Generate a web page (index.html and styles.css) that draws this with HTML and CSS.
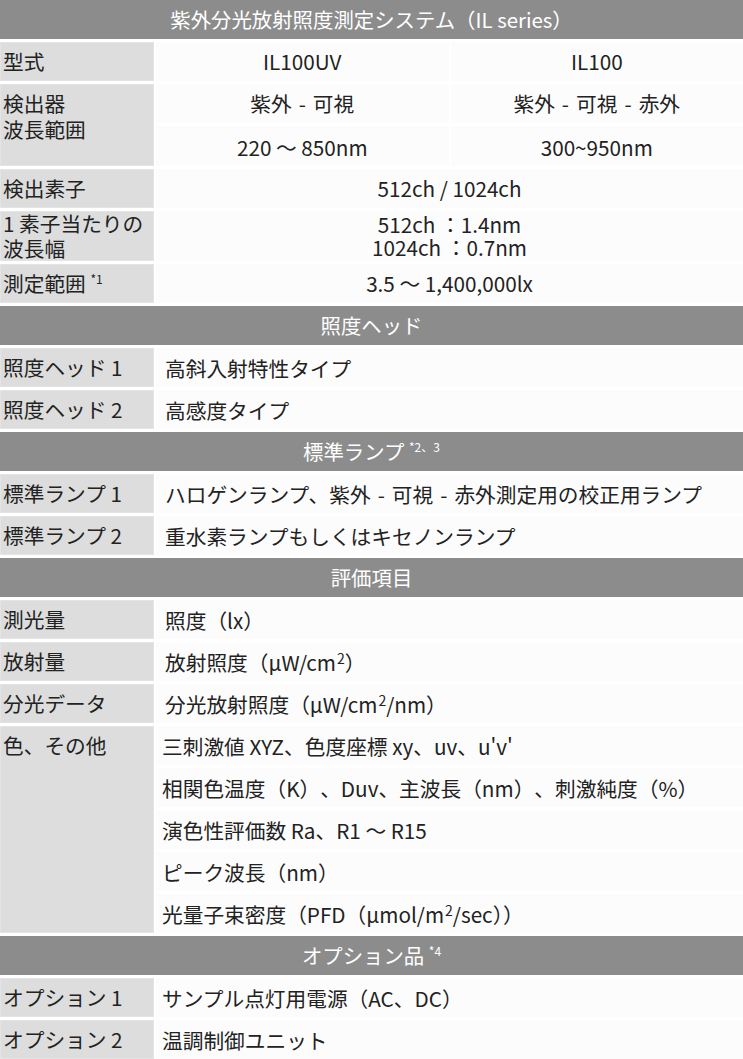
FILE: index.html
```html
<!DOCTYPE html>
<html lang="ja">
<head>
<meta charset="utf-8">
<title>紫外分光放射照度測定システム（IL series）</title>
<link rel="stylesheet" href="styles.css">
</head>
<body>
<div class="sheet">
  <div class="sec">紫外分光放射照度測定システム（IL series）</div>

  <div class="row">
    <div class="lab">型式</div>
    <div class="vals two">
      <div class="v c">IL100UV</div>
      <div class="v c">IL100</div>
    </div>
  </div>

  <div class="row">
    <div class="lab">検出器<br>波長範囲</div>
    <div class="vals two">
      <div class="v c">紫外<span class="dash">-</span>可視</div>
      <div class="v c">紫外<span class="dash">-</span>可視<span class="dash">-</span>赤外</div>
      <div class="v c tall">220 〜 850nm</div>
      <div class="v c tall">300~950nm</div>
    </div>
  </div>

  <div class="row">
    <div class="lab">検出素子</div>
    <div class="vals"><div class="v c">512ch / 1024ch</div></div>
  </div>

  <div class="row">
    <div class="lab lab-two">1 素子当たりの<br>波長幅</div>
    <div class="vals"><div class="v c multi">512ch ：1.4nm<br>1024ch ：0.7nm</div></div>
  </div>

  <div class="row">
    <div class="lab">測定範囲 <sup>*1</sup></div>
    <div class="vals"><div class="v c">3.5 〜 1,400,000lx</div></div>
  </div>

  <div class="sec">照度ヘッド</div>

  <div class="row">
    <div class="lab">照度ヘッド 1</div>
    <div class="vals"><div class="v">高斜入射特性タイプ</div></div>
  </div>
  <div class="row">
    <div class="lab">照度ヘッド 2</div>
    <div class="vals"><div class="v">高感度タイプ</div></div>
  </div>

  <div class="sec">標準ランプ <sup>*2、3</sup></div>

  <div class="row">
    <div class="lab">標準ランプ 1</div>
    <div class="vals"><div class="v">ハロゲンランプ、紫外<span class="dash">-</span>可視<span class="dash">-</span>赤外測定用の校正用ランプ</div></div>
  </div>
  <div class="row">
    <div class="lab">標準ランプ 2</div>
    <div class="vals"><div class="v">重水素ランプもしくはキセノンランプ</div></div>
  </div>

  <div class="sec">評価項目</div>

  <div class="row">
    <div class="lab">測光量</div>
    <div class="vals"><div class="v">照度（lx）</div></div>
  </div>
  <div class="row">
    <div class="lab">放射量</div>
    <div class="vals"><div class="v">放射照度（µW/cm<sup>2</sup>）</div></div>
  </div>
  <div class="row">
    <div class="lab">分光データ</div>
    <div class="vals"><div class="v">分光放射照度（µW/cm<sup>2</sup>/nm）</div></div>
  </div>
  <div class="row">
    <div class="lab">色、その他</div>
    <div class="vals">
      <div class="v tight">三刺激値 XYZ、色度座標 xy、uv、u'v'</div>
      <div class="v tight">相関色温度（K）、Duv、主波長（nm）、刺激純度（%）</div>
      <div class="v tight">演色性評価数 Ra、R1 〜 R15</div>
      <div class="v tight">ピーク波長（nm）</div>
      <div class="v tight">光量子束密度（PFD（µmol/m<sup>2</sup>/sec<span class="trim">））</span></div>
    </div>
  </div>

  <div class="sec">オプション品 <sup>*4</sup></div>

  <div class="row">
    <div class="lab">オプション 1</div>
    <div class="vals"><div class="v tight">サンプル点灯用電源（AC、DC）</div></div>
  </div>
  <div class="row">
    <div class="lab">オプション 2</div>
    <div class="vals"><div class="v tight">温調制御ユニット</div></div>
  </div>
</div>
</body>
</html>
```

FILE: styles.css
```css
html, body {
  margin: 0;
  padding: 0;
  background: #ffffff;
}

body {
  font-family: "Noto Sans CJK JP", "Noto Sans", sans-serif;
  font-size: 20.7px;
  color: #222222;
  text-spacing-trim: space-all;
}

.sheet {
  width: 743px;
  display: flex;
  flex-direction: column;
  gap: 3px;
}

.sec {
  height: 39px;
  background: #8c8c8c;
  color: #ffffff;
  text-align: center;
  line-height: 39px;
  font-size: 20.4px;
}

.sec sup,
.lab sup {
  font-size: 12px;
  line-height: 0;
  vertical-align: 8px;
}

.v sup {
  font-size: 14px;
  line-height: 0;
  vertical-align: 7px;
  margin-left: 1px;
}

.trim {
  text-spacing-trim: normal;
}

.dash {
  margin: 0 7px;
}

.row {
  display: grid;
  grid-template-columns: 154px 1fr;
  column-gap: 2px;
}

.lab {
  background: #dcdddc;
  box-shadow: inset 0 0 0 1px #e3e4e3;
  padding: 6px 3px 0 3px;
  line-height: 26px;
  white-space: nowrap;
}

.lab-two {
  padding-top: 0;
  line-height: 25px;
}

.vals {
  display: grid;
  grid-template-columns: 1fr;
  row-gap: 3px;
}

.vals.two {
  grid-template-columns: 1fr 1fr;
  column-gap: 2px;
  row-gap: 3px;
}

.v {
  background: #fcfcfc;
  height: 39px;
  padding: 7px 0 0 9px;
  line-height: 26px;
  box-sizing: border-box;
  white-space: nowrap;
}

.v.tight {
  padding-left: 6px;
}

.v.c {
  text-align: center;
  padding-left: 0;
  padding-top: 6px;
}

.v.tall {
  height: 40px;
  padding-top: 8px;
}

.v.multi {
  height: 50px;
  line-height: 23px;
  padding-top: 2px;
}
```
